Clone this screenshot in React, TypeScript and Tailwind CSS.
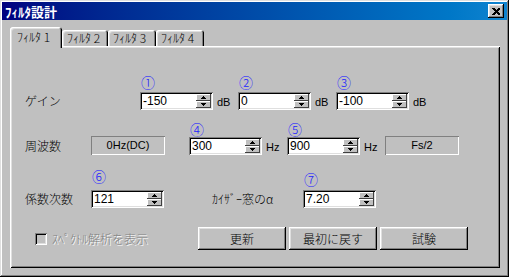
const jp = "font-['Noto_Sans_CJK_JP',sans-serif]";
const lat = "font-['Liberation_Sans',Arial,sans-serif]";
const raised =
  "shadow-[inset_-1px_-1px_#000,inset_1px_1px_#fff,inset_-2px_-2px_#808080,inset_2px_2px_#dfdfdf]";
const sunken =
  "shadow-[inset_1px_1px_#808080,inset_-1px_-1px_#fff,inset_2px_2px_#000,inset_-2px_-2px_#dfdfdf]";

function Arrow({ down }: { down?: boolean }) {
  return (
    <svg width="5" height="3" shapeRendering="crispEdges" className={down ? "rotate-180" : ""}>
      <rect x="2" y="0" width="1" height="1" fill="#000" />
      <rect x="1" y="1" width="3" height="1" fill="#000" />
      <rect x="0" y="2" width="5" height="1" fill="#000" />
    </svg>
  );
}

function Spin() {
  const half =
    "flex-1 bg-[#c0c0c0] flex items-center justify-center shadow-[inset_-1px_-1px_#404040,inset_1px_1px_#fff]";
  return (
    <div className="flex flex-col w-[15px] h-[14px] mr-[2px]">
      <div className={half}>
        <Arrow />
      </div>
      <div className={half}>
        <Arrow down />
      </div>
    </div>
  );
}

function SpinInput({ value }: { value: string }) {
  return (
    <div className={`w-[73px] h-[18px] bg-white flex items-center ${sunken}`}>
      <span className={`flex-1 pl-[3px] text-[12px] leading-none text-black ${lat}`}>{value}</span>
      <Spin />
    </div>
  );
}

function NumField({ n, value, numH }: { n: string; value: string; numH: string }) {
  return (
    <div className="flex flex-col">
      <div className={numH}>
        <span className={`block pl-[1px] -mt-[1px] text-[14px] leading-[14px] text-[#2020ff] ${jp}`}>{n}</span>
      </div>
      <SpinInput value={value} />
    </div>
  );
}

function Unit({ t }: { t: string }) {
  return (
    <span className={`w-[25px] h-[18px] pl-[4px] leading-[20px] text-[11px] text-black ${lat}`}>{t}</span>
  );
}

function Static({ t }: { t: string }) {
  return (
    <div
      className={`w-[74px] h-[19px] flex items-center justify-center text-[11px] text-black shadow-[inset_1px_1px_#808080,inset_-1px_-1px_#fff] ${lat}`}
    >
      {t}
    </div>
  );
}

function Button({ t }: { t: string }) {
  return (
    <div className={`w-[88px] h-[23px] flex items-center justify-center text-[12px] text-black ${raised}`}>
      {t}
    </div>
  );
}

export default function App() {
  const tabs = ["ﾌｨﾙﾀ 2", "ﾌｨﾙﾀ 3", "ﾌｨﾙﾀ 4"];
  const tabW = ["w-[46px]", "w-[48px]", "w-[48px]"];
  return (
    <div
      className={`w-[509px] h-[277px] bg-[#c0c0c0] p-[2px] flex flex-col font-light ${jp} shadow-[inset_-1px_-1px_#000,inset_1px_1px_#dfdfdf,inset_-2px_-2px_#808080,inset_2px_2px_#fff]`}
    >
      {/* タイトルバー */}
      <div className="h-[18px] flex items-center justify-between pl-[3px] pr-[3px] bg-gradient-to-r from-[#000080] to-[#1084d0]">
        <span className="text-white text-[13px] font-bold leading-none">ﾌｨﾙﾀ設計</span>
        <div className={`w-[16px] h-[14px] bg-[#c0c0c0] flex items-center justify-center ${raised}`}>
          <svg width="8" height="7" shapeRendering="crispEdges">
            <path d="M0 0h2l2 2l2-2h2v1l-2.5 2.5L8 6v1H6L4 5L2 7H0V6l2.5-2.5L0 1z" fill="#000" />
          </svg>
        </div>
      </div>

      {/* タブ */}
      <div className="flex items-end ml-[8px] mt-[7px] h-[19px]">
        <div
          className={`relative z-10 w-[52px] h-[21px] -mb-[2px] bg-[#c0c0c0] rounded-t-[3px] pt-[3px] pl-[7px] text-[12px] leading-[14px] text-black shadow-[inset_1px_1px_#fff,inset_-1px_0_#000,inset_-2px_0_#808080,inset_2px_2px_#dfdfdf]`}
        >
          ﾌｨﾙﾀ 1
        </div>
        {tabs.map((t, i) => (
          <div
            key={t}
            className={`${tabW[i]} h-[16px] bg-[#c0c0c0] rounded-t-[3px] pt-[1px] pl-[5px] text-[12px] leading-[14px] text-black shadow-[inset_1px_1px_#fff,inset_-1px_0_#000,inset_-2px_0_#808080,inset_2px_2px_#dfdfdf]`}
          >
            {t}
          </div>
        ))}
      </div>

      {/* パネル */}
      <div
        className={`ml-[8px] w-[490px] h-[222px] flex flex-col text-[12px] text-black shadow-[inset_1px_1px_#fff,inset_-1px_-1px_#000,inset_2px_2px_#dfdfdf,inset_-2px_-2px_#808080]`}
      >
        {/* ゲイン */}
        <div className="flex items-end mt-[30px]">
          <span className="ml-[15px] w-[115px] h-[18px] leading-[18px]">ゲイン</span>
          <NumField n="①" value="-150" numH="h-[16px]" />
          <Unit t="dB" />
          <NumField n="②" value="0" numH="h-[16px]" />
          <Unit t="dB" />
          <NumField n="③" value="-100" numH="h-[16px]" />
          <Unit t="dB" />
        </div>

        {/* 周波数 */}
        <div className="flex items-end mt-[13px]">
          <span className="ml-[15px] w-[66px] h-[18px] leading-[18px]">周波数</span>
          <Static t="0Hz(DC)" />
          <div className="w-[24px]" />
          <NumField n="④" value="300" numH="h-[14px]" />
          <Unit t="Hz" />
          <NumField n="⑤" value="900" numH="h-[14px]" />
          <Unit t="Hz" />
          <Static t="Fs/2" />
        </div>

        {/* 係数次数 */}
        <div className="flex items-end mt-[15px]">
          <span className="ml-[15px] w-[66px] h-[18px] leading-[18px]">係数次数</span>
          <NumField n="⑥" value="121" numH="h-[20px]" />
          <span className="ml-[48px] w-[91px] h-[18px] leading-[18px]">ｶｲｻﾞｰ窓のα</span>
          <NumField n="⑦" value="7.20" numH="h-[17px]" />
        </div>

        {/* ボタン行 */}
        <div className="flex items-center mt-[19px]">
          <div className="ml-[25px] w-[163px] flex items-center gap-[5px]">
            <div className="w-[12px] h-[12px] bg-[#c0c0c0] shadow-[inset_1px_1px_#808080,inset_-1px_-1px_#fff,inset_2px_2px_#000,inset_-2px_-2px_#dfdfdf]" />
            <span className="text-[#808080] [text-shadow:1px_1px_0_#fff] leading-none">ｽﾍﾟｸﾄﾙ解析を表示</span>
          </div>
          <div className="flex gap-[3px]">
            <Button t="更新" />
            <Button t="最初に戻す" />
            <Button t="試験" />
          </div>
        </div>
      </div>
    </div>
  );
}
